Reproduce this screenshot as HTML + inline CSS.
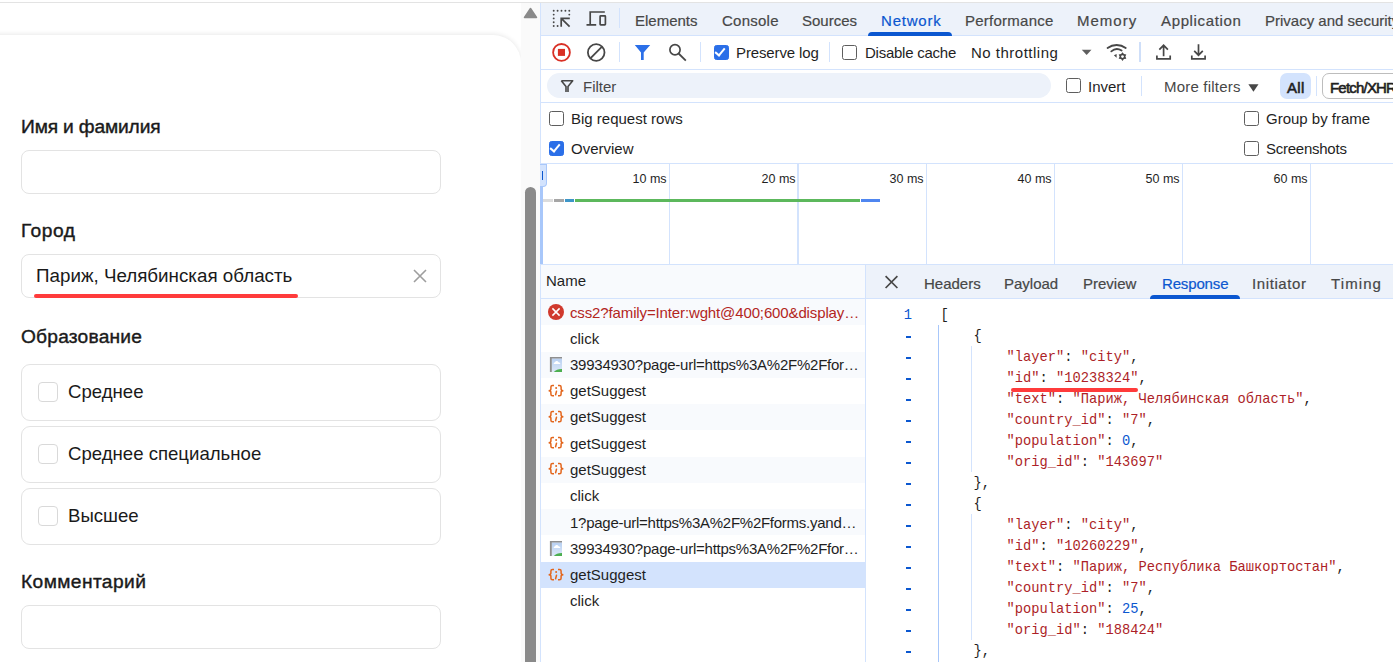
<!DOCTYPE html>
<html><head><meta charset="utf-8">
<style>
*{box-sizing:border-box;margin:0;padding:0}
html,body{width:1393px;height:662px;overflow:hidden;background:#fff;font-family:"Liberation Sans",sans-serif;position:relative}
.a{position:absolute}
.t{position:absolute;white-space:nowrap;line-height:1}
/* left form */
#topline{left:0;top:2px;width:1393px;height:1px;background:#e3e3e3}
#card{left:-40px;top:35px;width:561px;height:700px;background:#fff;border-radius:0 28px 0 0;box-shadow:0 -1px 5px rgba(0,0,0,.09)}
#track{left:521px;top:3px;width:19px;height:659px;background:#fafafa}
#thumb{left:525px;top:187px;width:11px;height:500px;background:#8a8a8a;border-radius:6px}
.lbl{font-size:19.2px;color:#1a1a1a;left:21px;-webkit-text-stroke:0.4px #1a1a1a}
.inp{left:21px;width:420px;height:44px;border:1px solid #e3e3e3;border-radius:8px;background:#fff}
.opt{left:21px;width:420px;height:57px;border:1px solid #e3e3e3;border-radius:9px;background:#fff}
.cb{left:16px;top:17px;width:20px;height:20px;border:1px solid #d9d9d9;border-radius:4px}
.ot{left:46px;font-size:18.6px;color:#1a1a1a}
/* devtools */
#dt{left:540px;top:3px;width:853px;height:659px;background:#fff;border-left:1px solid #d3e3fd}
.hb{position:absolute;left:0;width:853px;height:1px;background:#d3e3fd}
.ui{font-size:14.7px;color:#474747}

.hl{left:541px;width:852px;height:1px;background:#d3e3fd}
.vs{width:1px;background:#d3e3fd}
.ui{font-size:15px;color:#474747}
.tab{top:13px;-webkit-text-stroke:0.2px currentColor}
.r2{top:45px;color:#1f1f1f}
.r3{top:79px;color:#1f1f1f}
.r4{top:111px;color:#1f1f1f}
.r5{top:141px;color:#1f1f1f}
.b{font-weight:bold}
.sb{-webkit-text-stroke:0.6px #1f1f1f}
.cbx{width:15px;height:15px;border:1.5px solid #5e5e5e;border-radius:2.5px;background:#fff}
.cbx.on{background:#2b6fe8;border-color:#2b6fe8}
.cbx.on::after{content:"";position:absolute;left:2.2px;top:-0.3px;width:4px;height:8px;border:solid #fff;border-width:0 2px 2px 0;transform:rotate(40deg)}
.gl{top:164px;width:1px;height:100px;background:#d3e3fd}
.ms{top:173px;font-size:12.5px;color:#1f1f1f}
.dtab{top:276px;-webkit-text-stroke:0.2px currentColor}

.rn{left:570px;color:#1f1f1f;line-height:20px}
.gut{right:481px;font-family:"Liberation Mono",monospace;font-size:13.75px;color:#0b57d0;white-space:pre}
.cd{left:940.5px;font-family:"Liberation Mono",monospace;font-size:13.75px;color:#1f1f1f;white-space:pre}
</style></head><body>
<div id="topline" class="a"></div>
<div id="card" class="a"></div>

<div class="t lbl" style="top:117px;letter-spacing:-0.15px">Имя и фамилия</div>
<div class="a inp" style="top:150px"></div>
<div class="t lbl" style="top:221px;letter-spacing:0.5px">Город</div>
<div class="a inp" style="top:254px"></div>
<div class="t" style="left:36px;top:267px;font-size:18.8px;color:#1a1a1a">Париж, Челябинская область</div>
<svg class="a" style="left:412px;top:268px" width="16" height="16" viewBox="0 0 16 16"><path d="M2 2L14 14M14 2L2 14" stroke="#9e9e9e" stroke-width="1.6"/></svg>
<div class="a" style="left:34px;top:294px;width:264px;height:4px;background:#ff3b3b;border-radius:2px"></div>
<div class="t lbl" style="top:327px;letter-spacing:0.2px">Образование</div>
<div class="a opt" style="top:364px"><div class="a cb"></div><div class="t ot" style="top:18px">Среднее</div></div>
<div class="a opt" style="top:426px"><div class="a cb"></div><div class="t ot" style="top:18px">Среднее специальное</div></div>
<div class="a opt" style="top:488px"><div class="a cb"></div><div class="t ot" style="top:18px">Высшее</div></div>
<div class="t lbl" style="top:572px;letter-spacing:0.4px">Комментарий</div>
<div class="a inp" style="top:605px"></div>

<div id="track" class="a"></div>
<svg class="a" style="left:523px;top:7px" width="15" height="12" viewBox="0 0 15 12"><path d="M7.5 1.5L13.5 10.5H1.5Z" fill="#8a8a8a" stroke="#8a8a8a" stroke-width="1.5" stroke-linejoin="round"/></svg>
<div id="thumb" class="a"></div>


<!-- ============ DEVTOOLS ============ -->
<div class="a" style="left:540px;top:3px;width:853px;height:659px;background:#fff"></div>
<div class="a" style="left:540px;top:3px;width:1px;height:659px;background:#d3e3fd"></div>
<!-- tab bar -->
<div class="a" style="left:541px;top:3px;width:852px;height:32px;background:#edf2fa"></div>
<div class="a hl" style="top:35px"></div>
<div class="a hl" style="top:69px"></div>
<div class="a hl" style="top:102px"></div>
<div class="a hl" style="top:163px"></div>
<div class="a hl" style="top:264px"></div>

<svg class="a" style="left:550px;top:8px" width="22" height="22" viewBox="550 8 22 22">
 <g fill="#474747">
  <circle cx="553.7" cy="10.8" r=".95"/><circle cx="557.6" cy="10.8" r=".95"/><circle cx="561.5" cy="10.8" r=".95"/><circle cx="565.4" cy="10.8" r=".95"/><circle cx="569.3" cy="10.8" r=".95"/>
  <circle cx="553.7" cy="14.6" r=".95"/><circle cx="553.7" cy="18.4" r=".95"/><circle cx="553.7" cy="22.2" r=".95"/><circle cx="553.7" cy="26" r=".95"/>
  <circle cx="569.3" cy="14.6" r=".95"/><circle cx="557.6" cy="26" r=".95"/>
 </g>
 <path d="M561.2 26.8V18.3H569.8M561.5 18.6L569.6 26.6" stroke="#474747" stroke-width="1.7" fill="none"/>
</svg>
<svg class="a" style="left:584px;top:9px" width="25" height="19" viewBox="584 9 25 19">
 <path d="M590.2 24.8V12H604.8M586.5 24.8H596.2" stroke="#474747" stroke-width="1.7" fill="none"/>
 <rect x="600.1" y="15.8" width="5.3" height="9.1" rx=".6" stroke="#474747" stroke-width="1.7" fill="none"/>
</svg>
<div class="a vs" style="left:619px;top:8px;height:20px"></div>

<div class="t ui tab" style="left:635px">Elements</div>
<div class="t ui tab" style="left:722px;letter-spacing:0.25px">Console</div>
<div class="t ui tab" style="left:802px">Sources</div>
<div class="t ui tab" style="left:881px;color:#0b57d0;letter-spacing:0.8px">Network</div>
<div class="t ui tab" style="left:965px;letter-spacing:0.25px">Performance</div>
<div class="t ui tab" style="left:1077px;letter-spacing:1px">Memory</div>
<div class="t ui tab" style="left:1161px;letter-spacing:0.64px">Application</div>
<div class="t ui tab" style="left:1265px">Privacy and security</div>
<div class="a" style="left:868px;top:32px;width:84px;height:4px;background:#0b57d0;border-radius:4px 4px 0 0"></div>

<!-- toolbar row 2 -->
<svg class="a" style="left:550px;top:41px" width="24" height="24" viewBox="550 41 24 24">
 <circle cx="561.5" cy="52.4" r="8.4" stroke="#d93025" stroke-width="1.8" fill="none"/>
 <rect x="557.9" y="48.9" width="7.1" height="7" fill="#d93025"/>
</svg>
<svg class="a" style="left:585px;top:41px" width="24" height="24" viewBox="585 41 24 24">
 <circle cx="596.2" cy="52.5" r="8.3" stroke="#474747" stroke-width="1.8" fill="none"/>
 <path d="M601.8 46.9L590.6 58.1" stroke="#474747" stroke-width="1.8"/>
</svg>
<div class="a vs" style="left:619px;top:42px;height:20px"></div>
<svg class="a" style="left:633px;top:43px" width="20" height="20" viewBox="633 43 20 20">
 <path d="M634.8 45H650.2L643.7 52.6V60H641V52.6Z" fill="#2b6fe8"/>
</svg>
<svg class="a" style="left:666px;top:41px" width="24" height="24" viewBox="666 41 24 24">
 <circle cx="675" cy="49.8" r="5.1" stroke="#474747" stroke-width="1.7" fill="none"/>
 <path d="M678.6 53.5L685.8 60.6" stroke="#474747" stroke-width="1.8"/>
</svg>
<div class="a vs" style="left:700px;top:42px;height:20px"></div>
<div class="a cbx on" style="left:714px;top:45px"></div>
<div class="t ui r2" style="left:736px;letter-spacing:-0.12px">Preserve log</div>
<div class="a vs" style="left:829px;top:42px;height:20px"></div>
<div class="a cbx" style="left:842px;top:45px"></div>
<div class="t ui r2" style="left:865px;letter-spacing:-0.25px">Disable cache</div>
<div class="t ui r2" style="left:971px;letter-spacing:0.5px">No throttling</div>
<svg class="a" style="left:1080px;top:48px" width="13" height="9" viewBox="1080 48 13 9"><path d="M1081.8 49.7H1091.5L1086.65 55Z" fill="#5f5f5f"/></svg>
<svg class="a" style="left:1104px;top:41px" width="26" height="22" viewBox="1104 41 26 22">
 <path d="M1107.6 47.9A15.3 15.3 0 0 1 1125.7 47.9" stroke="#474747" stroke-width="1.9" fill="none" stroke-linecap="round"/>
 <path d="M1111.3 51.4A8.6 8.6 0 0 1 1121.6 50.6" stroke="#474747" stroke-width="1.8" fill="none" stroke-linecap="round"/>
 <path d="M1113.9 55.3L1116.6 54V57.8Z" fill="#474747"/>
 <path d="M1122.50 52.20L1123.95 54.09L1126.31 54.40L1125.40 56.60L1126.31 58.80L1123.95 59.11L1122.50 61.00L1121.05 59.11L1118.69 58.80L1119.60 56.60L1118.69 54.40L1121.05 54.09Z" fill="#474747"/>
 <circle cx="1122.5" cy="56.6" r="1.35" fill="#fff"/>
</svg>
<div class="a vs" style="left:1139px;top:42px;height:20px;width:2px;background:#cfdff9"></div>
<svg class="a" style="left:1154px;top:42px" width="20" height="20" viewBox="1154 42 20 20">
 <path d="M1163.6 56.2V45.5M1159.3 49.6L1163.6 45.3L1167.9 49.6" stroke="#474747" stroke-width="1.7" fill="none"/>
 <path d="M1156.9 55.6V58.9H1170.2V55.6" stroke="#474747" stroke-width="1.7" fill="none"/>
</svg>
<svg class="a" style="left:1189px;top:42px" width="20" height="20" viewBox="1189 42 20 20">
 <path d="M1198.5 44.2V55M1194.2 50.9L1198.5 55.2L1202.8 50.9" stroke="#474747" stroke-width="1.7" fill="none"/>
 <path d="M1191.8 55.6V58.9H1205.1V55.6" stroke="#474747" stroke-width="1.7" fill="none"/>
</svg>

<!-- filter row -->
<div class="a" style="left:547px;top:73px;width:504px;height:25px;border-radius:12.5px;background:#edf2fa"></div>
<svg class="a" style="left:559px;top:78px" width="16" height="16" viewBox="559 78 16 16">
 <path d="M561.3 80.7H572.7L568 86.4V92M566 92V86.4L561.3 80.7" stroke="#474747" stroke-width="1.6" fill="none" stroke-linejoin="round"/>
</svg>
<div class="t ui r3" style="left:583px;color:#474747">Filter</div>
<div class="a cbx" style="left:1066px;top:78px"></div>
<div class="t ui r3" style="left:1088px">Invert</div>
<div class="a vs" style="left:1141px;top:76px;height:20px"></div>
<div class="t ui r3" style="left:1164px;letter-spacing:0.2px;color:#474747">More filters</div>
<svg class="a" style="left:1247px;top:83px" width="13" height="10" viewBox="1247 83 13 10"><path d="M1248.4 84.3H1258.5L1253.45 91.7Z" fill="#474747"/></svg>
<div class="a" style="left:1280px;top:73px;width:31px;height:26px;border-radius:7px;background:#d3e3fd"></div>
<div class="t ui r3 sb" style="left:1287px;top:80px;color:#1f1f1f;letter-spacing:0.3px">All</div>
<div class="a vs" style="left:1316px;top:76px;height:20px"></div>
<div class="a" style="left:1322px;top:73px;width:100px;height:26px;border-radius:7px;border:1px solid #bdbdbd"></div>
<div class="t ui r3 sb" style="left:1330px;top:80px;color:#1f1f1f;letter-spacing:-0.8px">Fetch/XHR</div>

<!-- settings rows -->
<div class="a cbx" style="left:549px;top:111px"></div>
<div class="t ui r4" style="left:571px">Big request rows</div>
<div class="a cbx on" style="left:549px;top:141px"></div>
<div class="t ui r5" style="left:571px">Overview</div>
<div class="a cbx" style="left:1244px;top:111px"></div>
<div class="t ui r4" style="left:1266px">Group by frame</div>
<div class="a cbx" style="left:1244px;top:141px"></div>
<div class="t ui r5" style="left:1266px;letter-spacing:-0.25px">Screenshots</div>

<!-- overview -->
<div class="a gl" style="left:669px"></div>
<div class="a gl" style="left:797px;width:2px"></div>
<div class="a gl" style="left:926px"></div>
<div class="a gl" style="left:1054px"></div>
<div class="a gl" style="left:1182px"></div>
<div class="a gl" style="left:1310px"></div>
<div class="t ms" style="right:726.4px">10 ms</div>
<div class="t ms" style="right:597.4px">20 ms</div>
<div class="t ms" style="right:469.4px">30 ms</div>
<div class="t ms" style="right:341.4px">40 ms</div>
<div class="t ms" style="right:213.4px">50 ms</div>
<div class="t ms" style="right:85.4px">60 ms</div>
<div class="a" style="left:540px;top:164px;width:3px;height:100px;background:#a8c7fa"></div>
<div class="a" style="left:540px;top:164px;width:7px;height:23px;background:#d3e3fd;border:1px solid #a8c7fa;border-left:none;border-radius:0 0 4px 0"></div>
<div class="a" style="left:542px;top:171px;width:1px;height:9px;background:#0b57d0"></div>
<div class="a" style="left:543px;top:199px;width:10px;height:3px;background:#dcdcdc"></div>
<div class="a" style="left:554px;top:199px;width:10px;height:3px;background:#a6a6a6"></div>
<div class="a" style="left:565px;top:199px;width:9px;height:3px;background:#3d96c8"></div>
<div class="a" style="left:575px;top:199px;width:285px;height:3px;background:#5cb85c"></div>
<div class="a" style="left:861px;top:199px;width:19px;height:3px;background:#4f86f0"></div>

<!-- table -->
<div class="a" style="left:541px;top:265px;width:324px;height:33px;background:#f8fafd"></div>
<div class="a" style="left:541px;top:298px;width:324px;height:1px;background:#d3e3fd"></div>
<div class="t ui tbl" style="left:546px;top:273px;color:#1f1f1f">Name</div>
<div class="a" style="left:541px;top:299.00px;width:324px;height:26.25px;background:#f8fafd"></div>
<div class="t ui rn" style="top:303px;color:#b3261e;letter-spacing:-0.13px">css2?family=Inter:wght@400;600&amp;display…</div>
<svg class="a" style="left:548px;top:304px" width="16" height="16" viewBox="0 0 16 16"><circle cx="8" cy="8" r="8" fill="#d0392d"/><path d="M4.4 4.4L11.6 11.6M11.6 4.4L4.4 11.6" stroke="#fff" stroke-width="1.5"/></svg>
<div class="a" style="left:541px;top:325.25px;width:324px;height:26.25px;background:#fff"></div>
<div class="t ui rn" style="top:329px;">click</div>
<div class="a" style="left:541px;top:351.50px;width:324px;height:26.25px;background:#f8fafd"></div>
<div class="t ui rn" style="top:355px;letter-spacing:-0.24px">39934930?page-url=https%3A%2F%2Ffor…</div>
<svg class="a" style="left:549px;top:356px" width="14" height="16" viewBox="549 356 14 16"><defs><linearGradient id="sky356" x1="0" y1="0" x2="0" y2="1"><stop offset="0" stop-color="#b8d0f2"/><stop offset="1" stop-color="#dce8f8"/></linearGradient></defs><rect x="551.8" y="358.4" width="10.2" height="13.5" fill="url(#sky356)"/><path d="M549.9 356.9H562V358.4H551.8V371.9H549.9Z" fill="#8f8f8f"/><path d="M553.6 363.9H560.4Q560.2 362.2 558.6 362.2Q557.8 360.9 556.8 360.9Q555.4 360.9 555 362.2Q553.8 362.2 553.6 363.9Z" fill="#fff"/><path d="M553.8 371.9Q556.5 368.8 562 368.9V371.9Z" fill="#4caf50"/></svg>
<div class="a" style="left:541px;top:377.75px;width:324px;height:26.25px;background:#fff"></div>
<div class="t ui rn" style="top:381px;">getSuggest</div>
<svg class="a" style="left:547px;top:384px" width="18" height="14" viewBox="0 0 18 14"><path d="M7 1.6H5.5Q3.9 1.6 3.9 3.1V5.1Q3.9 6.7 1.6 6.7Q3.9 6.7 3.9 8.3V10.3Q3.9 11.8 5.5 11.8H7M11 1.6H12.5Q14.1 1.6 14.1 3.1V5.1Q14.1 6.7 16.4 6.7Q14.1 6.7 14.1 8.3V10.3Q14.1 11.8 12.5 11.8H11" stroke="#e3661d" stroke-width="1.5" fill="none"/><circle cx="9.1" cy="3.9" r="1" fill="#e3661d"/><path d="M9.5 7.3L8.6 10.8" stroke="#e3661d" stroke-width="1.5" stroke-linecap="round" fill="none"/></svg>
<div class="a" style="left:541px;top:404.00px;width:324px;height:26.25px;background:#f8fafd"></div>
<div class="t ui rn" style="top:407px;">getSuggest</div>
<svg class="a" style="left:547px;top:410px" width="18" height="14" viewBox="0 0 18 14"><path d="M7 1.6H5.5Q3.9 1.6 3.9 3.1V5.1Q3.9 6.7 1.6 6.7Q3.9 6.7 3.9 8.3V10.3Q3.9 11.8 5.5 11.8H7M11 1.6H12.5Q14.1 1.6 14.1 3.1V5.1Q14.1 6.7 16.4 6.7Q14.1 6.7 14.1 8.3V10.3Q14.1 11.8 12.5 11.8H11" stroke="#e3661d" stroke-width="1.5" fill="none"/><circle cx="9.1" cy="3.9" r="1" fill="#e3661d"/><path d="M9.5 7.3L8.6 10.8" stroke="#e3661d" stroke-width="1.5" stroke-linecap="round" fill="none"/></svg>
<div class="a" style="left:541px;top:430.25px;width:324px;height:26.25px;background:#fff"></div>
<div class="t ui rn" style="top:434px;">getSuggest</div>
<svg class="a" style="left:547px;top:436px" width="18" height="14" viewBox="0 0 18 14"><path d="M7 1.6H5.5Q3.9 1.6 3.9 3.1V5.1Q3.9 6.7 1.6 6.7Q3.9 6.7 3.9 8.3V10.3Q3.9 11.8 5.5 11.8H7M11 1.6H12.5Q14.1 1.6 14.1 3.1V5.1Q14.1 6.7 16.4 6.7Q14.1 6.7 14.1 8.3V10.3Q14.1 11.8 12.5 11.8H11" stroke="#e3661d" stroke-width="1.5" fill="none"/><circle cx="9.1" cy="3.9" r="1" fill="#e3661d"/><path d="M9.5 7.3L8.6 10.8" stroke="#e3661d" stroke-width="1.5" stroke-linecap="round" fill="none"/></svg>
<div class="a" style="left:541px;top:456.50px;width:324px;height:26.25px;background:#f8fafd"></div>
<div class="t ui rn" style="top:460px;">getSuggest</div>
<svg class="a" style="left:547px;top:462px" width="18" height="14" viewBox="0 0 18 14"><path d="M7 1.6H5.5Q3.9 1.6 3.9 3.1V5.1Q3.9 6.7 1.6 6.7Q3.9 6.7 3.9 8.3V10.3Q3.9 11.8 5.5 11.8H7M11 1.6H12.5Q14.1 1.6 14.1 3.1V5.1Q14.1 6.7 16.4 6.7Q14.1 6.7 14.1 8.3V10.3Q14.1 11.8 12.5 11.8H11" stroke="#e3661d" stroke-width="1.5" fill="none"/><circle cx="9.1" cy="3.9" r="1" fill="#e3661d"/><path d="M9.5 7.3L8.6 10.8" stroke="#e3661d" stroke-width="1.5" stroke-linecap="round" fill="none"/></svg>
<div class="a" style="left:541px;top:482.75px;width:324px;height:26.25px;background:#fff"></div>
<div class="t ui rn" style="top:486px;">click</div>
<div class="a" style="left:541px;top:509.00px;width:324px;height:26.25px;background:#f8fafd"></div>
<div class="t ui rn" style="top:513px;letter-spacing:-0.26px">1?page-url=https%3A%2F%2Fforms.yand…</div>
<div class="a" style="left:541px;top:535.25px;width:324px;height:26.25px;background:#fff"></div>
<div class="t ui rn" style="top:539px;letter-spacing:-0.24px">39934930?page-url=https%3A%2F%2Ffor…</div>
<svg class="a" style="left:549px;top:540px" width="14" height="16" viewBox="549 540 14 16"><defs><linearGradient id="sky540" x1="0" y1="0" x2="0" y2="1"><stop offset="0" stop-color="#b8d0f2"/><stop offset="1" stop-color="#dce8f8"/></linearGradient></defs><rect x="551.8" y="542.4" width="10.2" height="13.5" fill="url(#sky540)"/><path d="M549.9 540.9H562V542.4H551.8V555.9H549.9Z" fill="#8f8f8f"/><path d="M553.6 547.9H560.4Q560.2 546.2 558.6 546.2Q557.8 544.9 556.8 544.9Q555.4 544.9 555 546.2Q553.8 546.2 553.6 547.9Z" fill="#fff"/><path d="M553.8 555.9Q556.5 552.8 562 552.9V555.9Z" fill="#4caf50"/></svg>
<div class="a" style="left:541px;top:561.50px;width:324px;height:26.25px;background:#d3e3fd"></div>
<div class="t ui rn" style="top:565px;">getSuggest</div>
<svg class="a" style="left:547px;top:568px" width="18" height="14" viewBox="0 0 18 14"><path d="M7 1.6H5.5Q3.9 1.6 3.9 3.1V5.1Q3.9 6.7 1.6 6.7Q3.9 6.7 3.9 8.3V10.3Q3.9 11.8 5.5 11.8H7M11 1.6H12.5Q14.1 1.6 14.1 3.1V5.1Q14.1 6.7 16.4 6.7Q14.1 6.7 14.1 8.3V10.3Q14.1 11.8 12.5 11.8H11" stroke="#e3661d" stroke-width="1.5" fill="none"/><circle cx="9.1" cy="3.9" r="1" fill="#e3661d"/><path d="M9.5 7.3L8.6 10.8" stroke="#e3661d" stroke-width="1.5" stroke-linecap="round" fill="none"/></svg>
<div class="a" style="left:541px;top:587.75px;width:324px;height:26.25px;background:#fff"></div>
<div class="t ui rn" style="top:591px;">click</div>
<div class="a" style="left:865px;top:264px;width:1px;height:398px;background:#d3e3fd"></div>

<!-- details -->
<div class="a" style="left:866px;top:265px;width:527px;height:33px;background:#edf2fa"></div>
<div class="a" style="left:866px;top:298px;width:527px;height:1px;background:#d3e3fd"></div>
<svg class="a" style="left:883px;top:274px" width="17" height="16" viewBox="883 274 17 16">
 <path d="M885.6 276.2L897.4 288M897.4 276.2L885.6 288" stroke="#474747" stroke-width="1.7"/>
</svg>
<div class="t ui dtab" style="left:924px">Headers</div>
<div class="t ui dtab" style="left:1004px">Payload</div>
<div class="t ui dtab" style="left:1083px">Preview</div>
<div class="t ui dtab" style="left:1162px;color:#0b57d0;letter-spacing:-0.15px">Response</div>
<div class="t ui dtab" style="left:1252px;letter-spacing:0.6px">Initiator</div>
<div class="t ui dtab" style="left:1331px;letter-spacing:1.1px">Timing</div>
<div class="a" style="left:1150px;top:295px;width:90px;height:4px;background:#0b57d0;border-radius:4px 4px 0 0"></div>
<div class="t gut" style="top:309px">1</div>
<div class="t cd" style="top:309px">[</div>
<div class="a" style="left:906px;top:336px;width:5px;height:1.5px;background:#0b57d0"></div>
<div class="t cd" style="top:330px">    {</div>
<div class="a" style="left:906px;top:357px;width:5px;height:1.5px;background:#0b57d0"></div>
<div class="t cd" style="top:351px">        <span style="color:#ad1f28">"layer"</span>: <span style="color:#ad1f28">"city"</span>,</div>
<div class="a" style="left:906px;top:378px;width:5px;height:1.5px;background:#0b57d0"></div>
<div class="t cd" style="top:372px">        <span style="color:#ad1f28">"id"</span>: <span style="color:#ad1f28">"10238324"</span>,</div>
<div class="a" style="left:906px;top:399px;width:5px;height:1.5px;background:#0b57d0"></div>
<div class="t cd" style="top:393px">        <span style="color:#ad1f28">"text"</span>: <span style="color:#ad1f28">"Париж, Челябинская область"</span>,</div>
<div class="a" style="left:906px;top:420px;width:5px;height:1.5px;background:#0b57d0"></div>
<div class="t cd" style="top:414px">        <span style="color:#ad1f28">"country_id"</span>: <span style="color:#ad1f28">"7"</span>,</div>
<div class="a" style="left:906px;top:441px;width:5px;height:1.5px;background:#0b57d0"></div>
<div class="t cd" style="top:435px">        <span style="color:#ad1f28">"population"</span>: <span style="color:#0b57d0">0</span>,</div>
<div class="a" style="left:906px;top:462px;width:5px;height:1.5px;background:#0b57d0"></div>
<div class="t cd" style="top:456px">        <span style="color:#ad1f28">"orig_id"</span>: <span style="color:#ad1f28">"143697"</span></div>
<div class="a" style="left:906px;top:483px;width:5px;height:1.5px;background:#0b57d0"></div>
<div class="t cd" style="top:477px">    },</div>
<div class="a" style="left:906px;top:504px;width:5px;height:1.5px;background:#0b57d0"></div>
<div class="t cd" style="top:498px">    {</div>
<div class="a" style="left:906px;top:525px;width:5px;height:1.5px;background:#0b57d0"></div>
<div class="t cd" style="top:519px">        <span style="color:#ad1f28">"layer"</span>: <span style="color:#ad1f28">"city"</span>,</div>
<div class="a" style="left:906px;top:546px;width:5px;height:1.5px;background:#0b57d0"></div>
<div class="t cd" style="top:540px">        <span style="color:#ad1f28">"id"</span>: <span style="color:#ad1f28">"10260229"</span>,</div>
<div class="a" style="left:906px;top:567px;width:5px;height:1.5px;background:#0b57d0"></div>
<div class="t cd" style="top:561px">        <span style="color:#ad1f28">"text"</span>: <span style="color:#ad1f28">"Париж, Республика Башкортостан"</span>,</div>
<div class="a" style="left:906px;top:588px;width:5px;height:1.5px;background:#0b57d0"></div>
<div class="t cd" style="top:582px">        <span style="color:#ad1f28">"country_id"</span>: <span style="color:#ad1f28">"7"</span>,</div>
<div class="a" style="left:906px;top:609px;width:5px;height:1.5px;background:#0b57d0"></div>
<div class="t cd" style="top:603px">        <span style="color:#ad1f28">"population"</span>: <span style="color:#0b57d0">25</span>,</div>
<div class="a" style="left:906px;top:630px;width:5px;height:1.5px;background:#0b57d0"></div>
<div class="t cd" style="top:624px">        <span style="color:#ad1f28">"orig_id"</span>: <span style="color:#ad1f28">"188424"</span></div>
<div class="a" style="left:906px;top:651px;width:5px;height:1.5px;background:#0b57d0"></div>
<div class="t cd" style="top:645px">    },</div>
<div class="a" style="left:938px;top:325px;width:1px;height:337px;background:#a8c7fa"></div>
<div class="a" style="left:971px;top:346px;width:1px;height:126px;background:#d3e3fd"></div>
<div class="a" style="left:971px;top:514px;width:1px;height:126px;background:#d3e3fd"></div>
<div class="a" style="left:1011px;top:388px;width:127px;height:4px;background:#ff3b3b;border-radius:2px"></div>
</body></html>
